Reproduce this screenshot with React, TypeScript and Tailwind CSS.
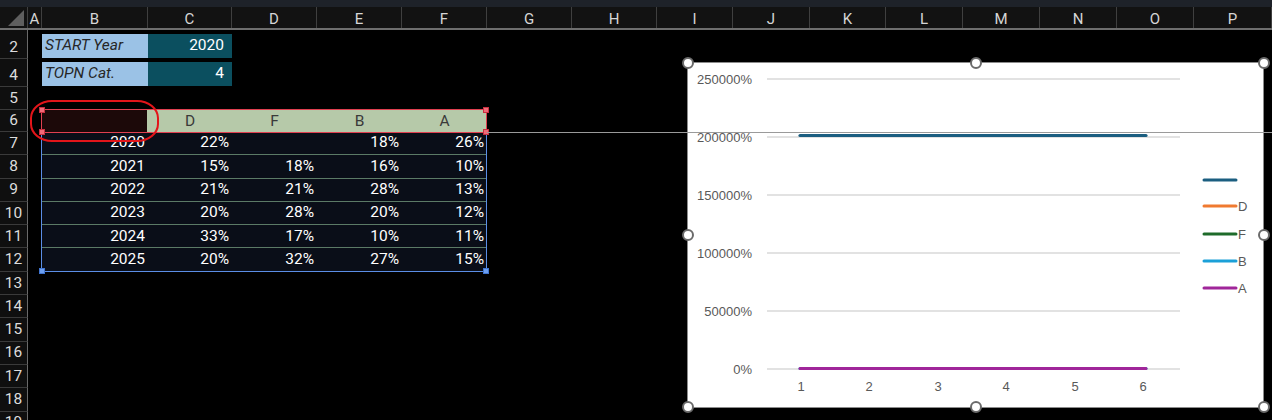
import React from "react";

const FONT = { fontFamily: "Roboto, 'Liberation Sans', sans-serif" };

const colHeads: { l: string; w: string }[] = [
  { l: "A", w: "w-[14px]" },
  { l: "B", w: "w-[106px]" },
  { l: "C", w: "w-[84px]" },
  { l: "D", w: "w-[85px]" },
  { l: "E", w: "w-[85px]" },
  { l: "F", w: "w-[85px]" },
  { l: "G", w: "w-[85px]" },
  { l: "H", w: "w-[85px]" },
  { l: "I", w: "w-[76px]" },
  { l: "J", w: "w-[77px]" },
  { l: "K", w: "w-[76px]" },
  { l: "L", w: "w-[77px]" },
  { l: "M", w: "w-[77px]" },
  { l: "N", w: "w-[77px]" },
  { l: "O", w: "w-[77px]" },
  { l: "P", w: "w-[78px]" },
];

const data = [
  ["2020", "22%", "", "18%", "26%"],
  ["2021", "15%", "18%", "16%", "10%"],
  ["2022", "21%", "21%", "28%", "13%"],
  ["2023", "20%", "28%", "20%", "12%"],
  ["2024", "33%", "17%", "10%", "11%"],
  ["2025", "20%", "32%", "27%", "15%"],
];

function RowHdr({ n }: { n: string }) {
  return (
    <div className="w-[28px] shrink-0 h-full flex items-end justify-center pb-[1px] bg-[#0f0f0f] border-r border-b border-r-[#6a6a6a] border-b-[#3a3a3a] text-[15.5px] text-[#dcdcdc] leading-none">
      <span className="pb-[2px]">{n}</span>
    </div>
  );
}

function Handle({ x, y }: { x: number; y: number }) {
  return (
    <div
      className="absolute w-[12px] h-[12px] rounded-full bg-white border-2 border-[#6b6b6b]"
      style={{ left: x - 6, top: y - 6 }}
    />
  );
}

function Sq({ x, y, c }: { x: number; y: number; c: "r" | "b" }) {
  return (
    <div
      className={
        c === "r"
          ? "absolute w-[6px] h-[6px] bg-[#f06a78] border border-[#c83040]"
          : "absolute w-[6px] h-[6px] bg-[#6b9ef0] border border-[#3f74d0]"
      }
      style={{ left: x - 3, top: y - 3 }}
    />
  );
}

function Chart() {
  const yl = [
    ["250000%", 17],
    ["200000%", 75],
    ["150000%", 133],
    ["100000%", 191],
    ["50000%", 249],
    ["0%", 307],
  ] as const;
  const xs = [114, 182, 251, 319, 388, 456];
  const legend = [
    ["", "#1b5e80", 118],
    ["D", "#f07a30", 144],
    ["F", "#1e6b2a", 172],
    ["B", "#1ba0d8", 199],
    ["A", "#a0269a", 226],
  ] as const;
  return (
    <div className="absolute left-[687px] top-[62px] w-[577px] h-[346px] bg-white border-[1.5px] border-[#8c8c8c]">
      <svg width="577" height="346" viewBox="0 0 577 346" className="absolute left-[-1.5px] top-[-1.5px]" style={{ fontFamily: "'Liberation Sans', Arial, sans-serif" }}>
        {yl.map(([t, y]) => (
          <g key={t}>
            <line x1="80" x2="493" y1={y} y2={y} stroke="#d9d9d9" strokeWidth="1.3" />
            <text x="65" y={y + 4.5} textAnchor="end" fontSize="13" fill="#595959">
              {t}
            </text>
          </g>
        ))}
        {xs.map((x, i) => (
          <text key={i} x={x} y={329} textAnchor="middle" fontSize="13" fill="#595959">
            {i + 1}
          </text>
        ))}
        <line x1="113" x2="459" y1="73.5" y2="73.5" stroke="#1b5e80" strokeWidth="3.2" strokeLinecap="round" />
        <line x1="113" x2="459" y1="306.5" y2="306.5" stroke="#1ba0d8" strokeWidth="3" strokeLinecap="round" />
        <line x1="113" x2="459" y1="306.5" y2="306.5" stroke="#a0269a" strokeWidth="3" strokeLinecap="round" />
        {legend.map(([t, c, y]) => (
          <g key={y}>
            <line x1="517" x2="549" y1={y} y2={y} stroke={c} strokeWidth="3" strokeLinecap="round" />
            <text x="551" y={y + 4.5} fontSize="13" fill="#595959">
              {t}
            </text>
          </g>
        ))}
      </svg>
    </div>
  );
}

export default function App() {
  return (
    <div className="relative w-[1272px] h-[420px] overflow-hidden bg-black" style={FONT}>
      {/* top bar */}
      <div className="h-[7px] bg-[#1e2229]" />
      {/* column header */}
      <div className="flex h-[23px] bg-[#121212] border-b-2 border-[#6e6e6e]">
        <div className="w-[28px] shrink-0 relative border-r border-[#3f3f3f]">
          <svg width="20" height="16" className="absolute right-[3px] bottom-[2px]">
            <polygon points="20,0 20,16 4,16" fill="#5f5f5f" />
          </svg>
        </div>
        {colHeads.map((c) => (
          <div
            key={c.l}
            className={`${c.w} shrink-0 flex items-center justify-center border-r border-[#3f3f3f] text-[15px] text-[#d6d6d6] leading-none pt-[3px]`}
          >
            {c.l}
          </div>
        ))}
      </div>

      {/* row 2 */}
      <div className="flex h-[29px]">
        <RowHdr n="2" />
        <div className="w-[14px] shrink-0" />
        <div className="w-[106px] shrink-0 pt-[4px] pb-[1px]">
          <div className="h-full bg-[#9bc2e6] flex items-center pl-[3px] italic text-[15.5px] text-[#262626]">START Year</div>
        </div>
        <div className="w-[84px] shrink-0 pt-[4px] pb-[1px]">
          <div className="h-full bg-[#0b4f5f] flex items-center justify-end pr-[8px] text-[15.5px] text-white">2020</div>
        </div>
      </div>
      {/* row 4 */}
      <div className="flex h-[28px]">
        <RowHdr n="4" />
        <div className="w-[14px] shrink-0" />
        <div className="w-[106px] shrink-0 pt-[3px] pb-[1px]">
          <div className="h-full bg-[#9bc2e6] flex items-center pl-[3px] italic text-[15.5px] text-[#262626]">TOPN Cat.</div>
        </div>
        <div className="w-[84px] shrink-0 pt-[3px] pb-[1px]">
          <div className="h-full bg-[#0b4f5f] flex items-center justify-end pr-[8px] text-[15.5px] text-white">4</div>
        </div>
      </div>
      {/* row 5 */}
      <div className="flex h-[23px]">
        <RowHdr n="5" />
      </div>
      {/* row 6 */}
      <div className="flex h-[22px]">
        <RowHdr n="6" />
        <div className="w-[14px] shrink-0" />
        <div className="w-[106px] shrink-0 bg-[#1c0909] border-r border-[#b6c9a9]" />
        {["D", "F", "B", "A"].map((t, i) => (
          <div
            key={t}
            className={`${i === 0 ? "w-[84px]" : "w-[85px]"} shrink-0 bg-[#b6c9a9] flex items-center justify-center pt-[2px] text-[15.5px] text-[#3a3a3a]`}
          >
            {t}
          </div>
        ))}
      </div>
      {/* rows 7-12 */}
      {data.map((r, ri) => (
        <div key={ri} className="flex h-[23.3px]">
          <RowHdr n={String(7 + ri)} />
          <div className="w-[14px] shrink-0" />
          <div className="flex bg-[#0a0e18] border-b border-[#5b7a66]">
            {r.map((v, ci) => (
              <div
                key={ci}
                className={`${ci === 0 ? "w-[106px]" : ci === 1 ? "w-[84px]" : "w-[85px]"} shrink-0 flex items-center justify-end pr-[3px] text-[15.5px] text-white leading-none`}
              >
                {v}
              </div>
            ))}
          </div>
        </div>
      ))}
      {/* rows 13-19 */}
      {["13", "14", "15", "16", "17", "18", "19"].map((n) => (
        <div key={n} className="flex h-[23.3px]">
          <RowHdr n={n} />
        </div>
      ))}

      {/* selection outlines */}
      <div className="absolute left-[41px] top-[132px] w-[446px] h-[140px] border border-[#5b8ee6]" />
      <div className="absolute left-[41px] top-[109px] w-[446px] h-[24px] border border-[#e04050]" />
      <Sq x={42} y={110} c="r" />
      <Sq x={486} y={110} c="r" />
      <Sq x={42} y={132} c="r" />
      <Sq x={486} y={132} c="r" />
      <Sq x={42} y={271} c="b" />
      <Sq x={486} y={271} c="b" />

      {/* red annotation ellipse */}
      <div className="absolute left-[30px] top-[100px] w-[129px] h-[42px] border-2 border-[#e3151a] rounded-[22px/18px]" />

      {/* chart */}
      <Chart />

      {/* freeze line */}
      <div className="absolute left-[487px] top-[132px] w-[785px] h-[1px] bg-[#9a9a9a]" />

      {/* chart handles */}
      <Handle x={688} y={63} />
      <Handle x={976} y={63} />
      <Handle x={1264} y={63} />
      <Handle x={688} y={235} />
      <Handle x={1264} y={235} />
      <Handle x={688} y={407} />
      <Handle x={976} y={407} />
      <Handle x={1264} y={407} />
    </div>
  );
}
